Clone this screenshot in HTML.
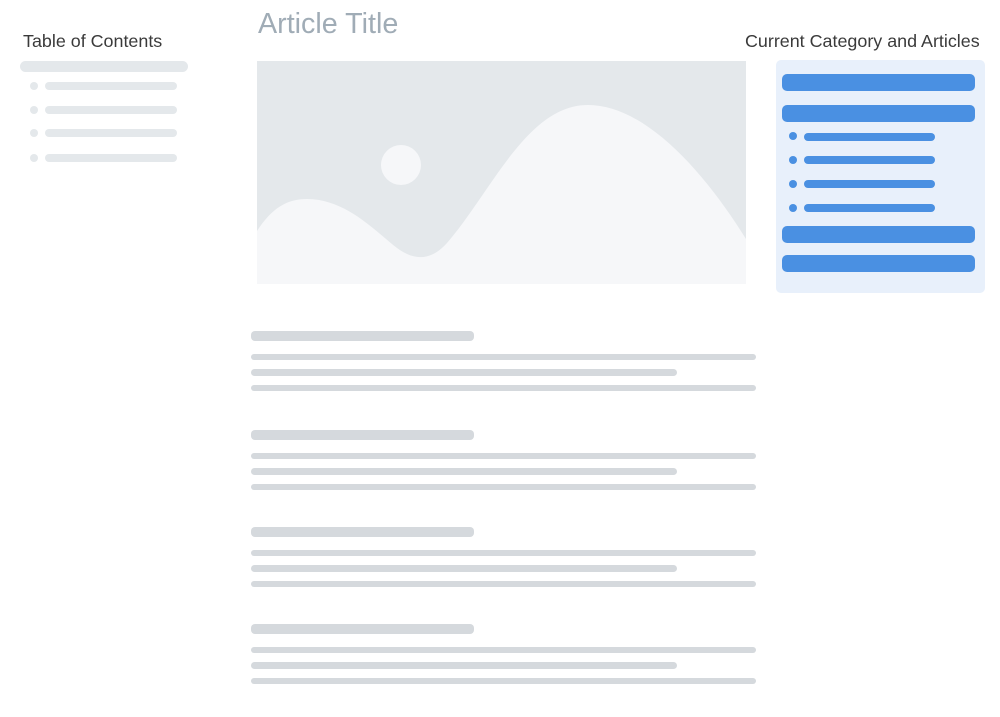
<!DOCTYPE html>
<html><head><style>
body{margin:0;width:1000px;height:717px;background:#fff;position:relative;overflow:hidden;font-family:"Liberation Sans",sans-serif}
.a{position:absolute}
.g{background:#e4e8eb;border-radius:6px}
.d{background:#d5d9dd;border-radius:4px}
.b{background:#4a90e2;border-radius:5px}
</style></head><body>
<div class="a" style="left:23px;top:31px;font-size:17.9px;color:#3a3a3a">Table of Contents</div>
<div class="a" style="left:258px;top:8px;font-size:28.7px;color:#a0acb6">Article Title</div>
<div class="a" style="left:745px;top:31px;font-size:17.9px;color:#3a3a3a">Current Category and Articles</div>

<div class="a g" style="left:20px;top:61px;width:168px;height:11px"></div>
<div class="a g" style="left:30px;top:82px;width:8px;height:8px;border-radius:50%"></div>
<div class="a g" style="left:45px;top:82px;width:132px;height:8px"></div>
<div class="a g" style="left:30px;top:106px;width:8px;height:8px;border-radius:50%"></div>
<div class="a g" style="left:45px;top:106px;width:132px;height:8px"></div>
<div class="a g" style="left:30px;top:129px;width:8px;height:8px;border-radius:50%"></div>
<div class="a g" style="left:45px;top:129px;width:132px;height:8px"></div>
<div class="a g" style="left:30px;top:154px;width:8px;height:8px;border-radius:50%"></div>
<div class="a g" style="left:45px;top:154px;width:132px;height:8px"></div>

<svg class="a" style="left:257px;top:61px" width="489" height="223" viewBox="0 0 489 223">
<rect width="489" height="223" fill="#e4e8eb"/>
<circle cx="144" cy="104" r="20" fill="#f6f7f9"/>
<path d="M0,170 C15,147 30,138 50,138 C90,138 120,172 140,187 C155,198 172,202 190,182 C235,130 270,44 331,44 C390,44 450,115 489,178 L489,223 L0,223Z" fill="#f6f7f9"/>
</svg>

<div class="a" style="left:776px;top:60px;width:209px;height:233px;background:#e8f0fb;border-radius:5px"></div>
<div class="a b" style="left:782px;top:74px;width:193px;height:17px"></div>
<div class="a b" style="left:782px;top:105px;width:193px;height:17px"></div>
<div class="a b" style="left:789px;top:132px;width:8px;height:8px;border-radius:50%"></div>
<div class="a b" style="left:804px;top:133px;width:131px;height:8px;border-radius:4px"></div>
<div class="a b" style="left:789px;top:156px;width:8px;height:8px;border-radius:50%"></div>
<div class="a b" style="left:804px;top:156px;width:131px;height:8px;border-radius:4px"></div>
<div class="a b" style="left:789px;top:180px;width:8px;height:8px;border-radius:50%"></div>
<div class="a b" style="left:804px;top:180px;width:131px;height:8px;border-radius:4px"></div>
<div class="a b" style="left:789px;top:204px;width:8px;height:8px;border-radius:50%"></div>
<div class="a b" style="left:804px;top:204px;width:131px;height:8px;border-radius:4px"></div>
<div class="a b" style="left:782px;top:226px;width:193px;height:17px"></div>
<div class="a b" style="left:782px;top:255px;width:193px;height:17px"></div>

<div class="a d" style="left:251px;top:331px;width:223px;height:10px"></div>
<div class="a d" style="left:251px;top:354px;width:505px;height:6px"></div>
<div class="a d" style="left:251px;top:369px;width:426px;height:7px"></div>
<div class="a d" style="left:251px;top:385px;width:505px;height:6px"></div>

<div class="a d" style="left:251px;top:430px;width:223px;height:10px"></div>
<div class="a d" style="left:251px;top:453px;width:505px;height:6px"></div>
<div class="a d" style="left:251px;top:468px;width:426px;height:7px"></div>
<div class="a d" style="left:251px;top:484px;width:505px;height:6px"></div>

<div class="a d" style="left:251px;top:527px;width:223px;height:10px"></div>
<div class="a d" style="left:251px;top:550px;width:505px;height:6px"></div>
<div class="a d" style="left:251px;top:565px;width:426px;height:7px"></div>
<div class="a d" style="left:251px;top:581px;width:505px;height:6px"></div>

<div class="a d" style="left:251px;top:624px;width:223px;height:10px"></div>
<div class="a d" style="left:251px;top:647px;width:505px;height:6px"></div>
<div class="a d" style="left:251px;top:662px;width:426px;height:7px"></div>
<div class="a d" style="left:251px;top:678px;width:505px;height:6px"></div>
</body></html>
